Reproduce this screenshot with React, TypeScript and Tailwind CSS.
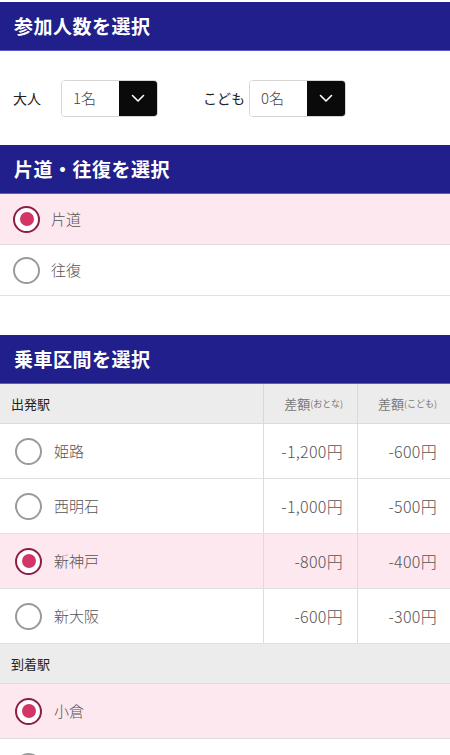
import React from 'react';

const font = { fontFamily: '"Noto Sans CJK JP", "Noto Sans", sans-serif' };

function SectionHeader({ title }: { title: string }) {
  return (
    <div className="h-[49px] bg-[#211f8b] border-b border-[#5a5cc4] flex items-center px-[14px]">
      <h2 className="text-white text-[19px] font-bold tracking-[0.5px]">{title}</h2>
    </div>
  );
}

function Radio({ checked }: { checked: boolean }) {
  return checked ? (
    <span className="w-[27px] h-[27px] rounded-full border-2 border-[#8e1d45] bg-white flex items-center justify-center shrink-0">
      <span className="w-[14px] h-[14px] rounded-full bg-[#d23566]" />
    </span>
  ) : (
    <span className="w-[27px] h-[27px] rounded-full border-2 border-[#9a9a9a] bg-white shrink-0" />
  );
}

function Select({ value }: { value: string }) {
  return (
    <div className="flex h-[37px] w-[97px] rounded-[4px] border border-[#d6d6d6] overflow-hidden">
      <div className="flex-1 flex items-center pl-[11px] text-[15px] font-light text-[#444] bg-white">{value}</div>
      <div className="w-[38px] bg-[#0a0a0a] flex items-center justify-center">
        <svg width="14" height="9" viewBox="0 0 14 9" fill="none">
          <path d="M1.5 1.5 L7 7 L12.5 1.5" stroke="white" strokeWidth="1.6" strokeLinecap="round" strokeLinejoin="round" />
        </svg>
      </div>
    </div>
  );
}

const departures = [
  { name: '姫路', adult: '-1,200円', child: '-600円', checked: false },
  { name: '西明石', adult: '-1,000円', child: '-500円', checked: false },
  { name: '新神戸', adult: '-800円', child: '-400円', checked: true },
  { name: '新大阪', adult: '-600円', child: '-300円', checked: false },
];

export default function App() {
  return (
    <div className="w-[450px] h-[755px] overflow-hidden bg-white pt-[2px]" style={font}>
      {/* 参加人数 */}
      <SectionHeader title="参加人数を選択" />
      <div className="h-[94px] flex items-center px-[13px]">
        <span className="text-[14px] text-[#222] w-[48px]">大人</span>
        <Select value="1名" />
        <span className="text-[14px] text-[#222] ml-[45px] w-[46px]">こども</span>
        <Select value="0名" />
      </div>

      {/* 片道・往復 */}
      <SectionHeader title="片道・往復を選択" />
      <div className="h-[51px] bg-[#fce8ee] border-b border-[#e2dcdf] flex items-center gap-[11px] px-[13px]">
        <Radio checked />
        <span className="text-[15px] font-light text-[#555]">片道</span>
      </div>
      <div className="h-[51px] border-b border-[#e2e2e2] flex items-center gap-[11px] px-[13px]">
        <Radio checked={false} />
        <span className="text-[15px] font-light text-[#555]">往復</span>
      </div>
      <div className="h-[39px]" />

      {/* 乗車区間 */}
      <SectionHeader title="乗車区間を選択" />
      <div className="h-[40px] bg-[#ececec] border-b border-[#dcdcdc] flex text-[13px]">
        <div className="flex-1 flex items-center pl-[11px] text-[#222]">出発駅</div>
        <div className="w-[94px] border-l border-[#d8d8d8] flex items-center justify-end pr-[14px] text-[#777]">
          差額<span className="text-[9px]">(おとな)</span>
        </div>
        <div className="w-[93px] border-l border-[#d8d8d8] flex items-center justify-end pr-[13px] text-[#777]">
          差額<span className="text-[9px]">(こども)</span>
        </div>
      </div>
      {departures.map((d) => (
        <div
          key={d.name}
          className={`h-[55px] border-b border-[#e0e0e0] flex ${d.checked ? 'bg-[#fce8ee]' : 'bg-white'}`}
        >
          <div className="flex-1 flex items-center gap-[12px] pl-[15px]">
            <Radio checked={d.checked} />
            <span className="text-[15px] font-light text-[#555]">{d.name}</span>
          </div>
          <div className="w-[94px] border-l border-[#dcdcdc] flex items-center justify-end pr-[14px] text-[16px] font-light text-[#555] tracking-[0.3px]">
            {d.adult}
          </div>
          <div className="w-[93px] border-l border-[#dcdcdc] flex items-center justify-end pr-[13px] text-[16px] font-light text-[#555] tracking-[0.3px]">
            {d.child}
          </div>
        </div>
      ))}
      <div className="h-[40px] bg-[#ececec] border-b border-[#dcdcdc] flex items-center pl-[11px] text-[13px] text-[#222]">
        到着駅
      </div>
      <div className="h-[55px] bg-[#fce8ee] border-b border-[#e0dadd] flex items-center gap-[12px] pl-[15px]">
        <Radio checked />
        <span className="text-[15px] font-light text-[#555]">小倉</span>
      </div>
      <div className="h-[55px] flex items-center gap-[12px] pl-[15px]">
        <Radio checked={false} />
      </div>
    </div>
  );
}
